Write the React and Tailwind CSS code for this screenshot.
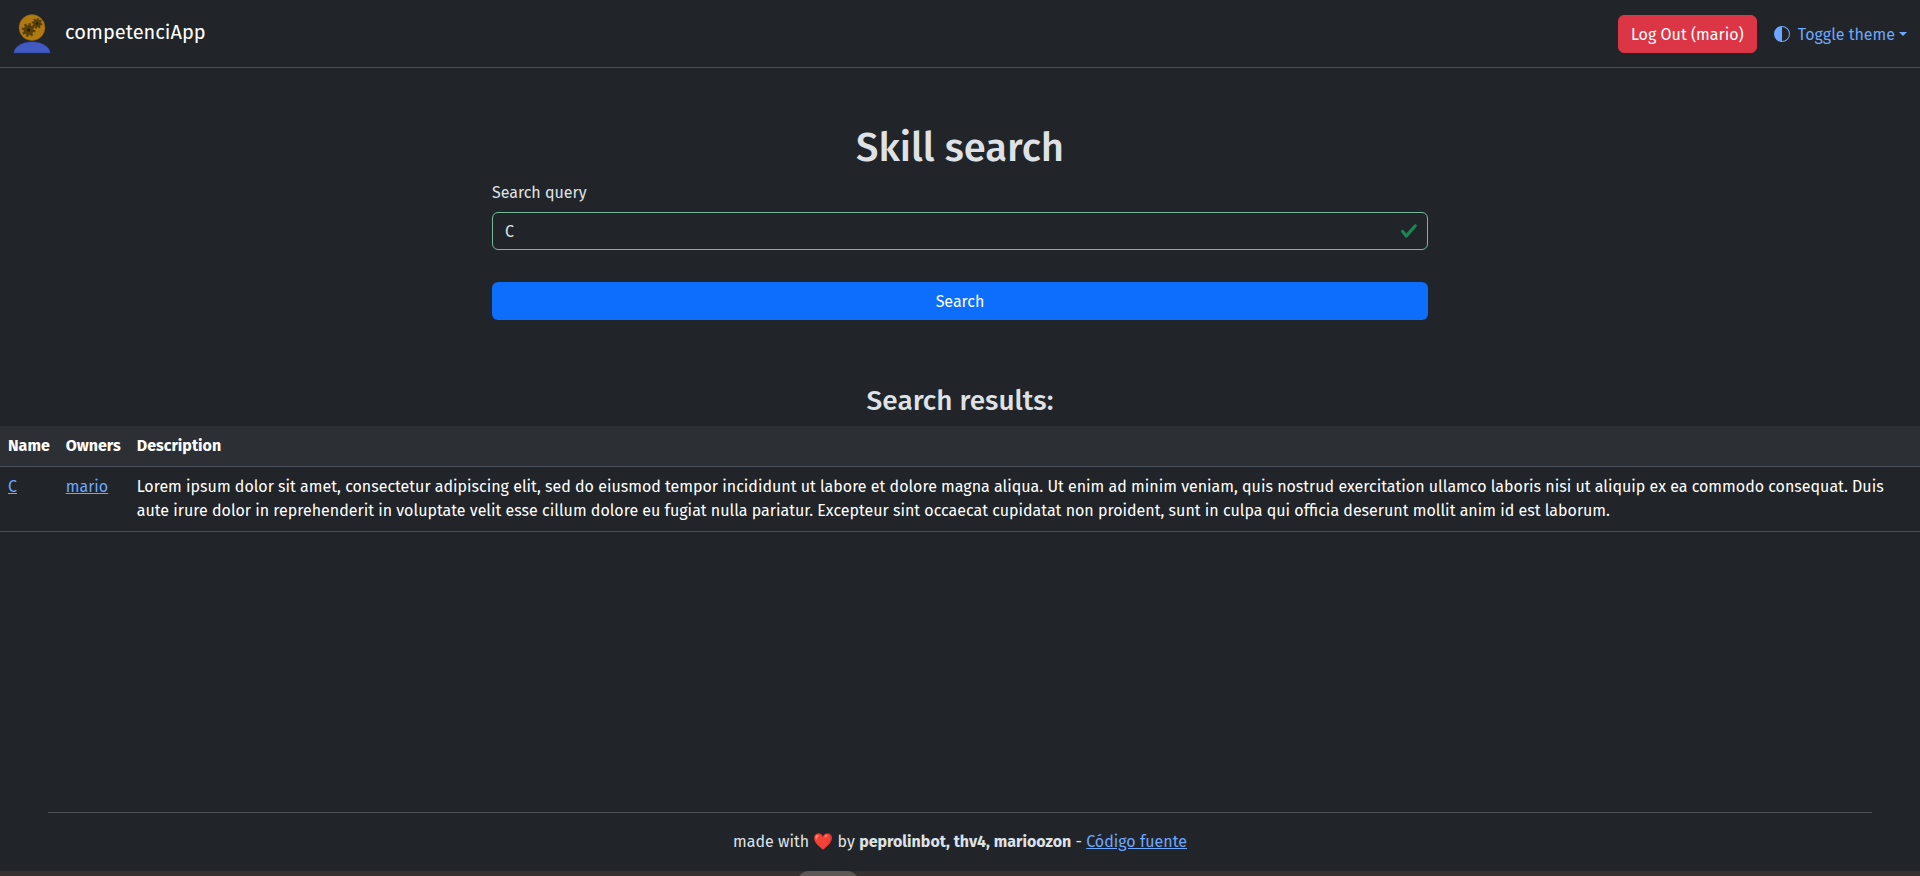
const results = [
  {
    name: 'C',
    owner: 'mario',
    description:
      'Lorem ipsum dolor sit amet, consectetur adipiscing elit, sed do eiusmod tempor incididunt ut labore et dolore magna aliqua. Ut enim ad minim veniam, quis nostrud exercitation ullamco laboris nisi ut aliquip ex ea commodo consequat. Duis aute irure dolor in reprehenderit in voluptate velit esse cillum dolore eu fugiat nulla pariatur. Excepteur sint occaecat cupidatat non proident, sunt in culpa qui officia deserunt mollit anim id est laborum.',
  },
];

const teeth = [0, 45, 90, 135, 180, 225, 270, 315];

function Gear({ x, y, scale }) {
  return (
    <g transform={`translate(${x} ${y}) scale(${scale}) rotate(12)`}>
      <circle r="5" fill="#59400a" />
      {teeth.map((angle) => (
        <rect key={angle} x="-1.2" y="-6.9" width="2.4" height="3" fill="#59400a" transform={`rotate(${angle})`} />
      ))}
      <circle r="1.6" fill="#2a1c02" />
    </g>
  );
}

function Logo() {
  return (
    <svg className="h-[42px] w-10 shrink-0" viewBox="0 0 40 42">
      <circle cx="20" cy="15.6" r="13" fill="#b17a10" stroke="#7d5a18" strokeWidth="0.5" />
      <Gear x={16.6} y={18} scale={1} />
      <Gear x={25} y={11.4} scale={0.78} />
      <path d="M1.7 41C2.2 34.6 9.8 29.7 20 29.7S37.8 34.6 38.3 41z" fill="#415ac2" stroke="#26357a" strokeWidth="0.4" />
    </svg>
  );
}

function Navbar() {
  return (
    <header className="flex h-[68px] items-center justify-between border-b border-[#495057] px-3 pt-px">
      <a href="#" className="flex items-start gap-[13px] self-start pt-[11px] text-xl leading-[30px] text-white">
        <Logo />
        <span className="pt-[5px]">competenciApp</span>
      </a>
      <div className="flex items-center gap-1">
        <button className="rounded-md border border-[#dc3545] bg-[#dc3545] px-3 pt-[7px] pb-[5px] text-white">Log Out (mario)</button>
        <button className="flex items-center border border-transparent py-1.5 pl-3 text-[#6ea8fe]">
          <svg className="mr-2 size-4" viewBox="0 0 16 16" fill="currentColor">
            <path d="M8 15A7 7 0 1 0 8 1zm0 1A8 8 0 1 1 8 0a8 8 0 0 1 0 16" />
          </svg>
          <span className="-mb-0.5">Toggle theme</span>
          <span className="ml-1 border-x-4 border-t-4 border-x-transparent border-t-current" />
        </button>
      </div>
    </header>
  );
}

function SearchForm() {
  return (
    <form className="mx-auto flex w-[936px] flex-col pt-14">
      <h1 className="mb-2 text-center text-[40px] leading-[48px] font-medium">Skill search</h1>
      <label className="mb-[7px] pt-px" htmlFor="query">Search query</label>
      <div className="mb-8 flex h-[38px] items-center rounded-md border border-[#75b798] pr-[9px] pl-3">
        <input id="query" defaultValue="C" className="min-w-0 grow bg-transparent pt-0.5 outline-none" />
        <svg className="size-[18px]" viewBox="0 0 8 8" fill="#198754">
          <path d="M2.3 6.73.6 4.53c-.4-1.04.46-1.4 1.1-.8l1.1 1.4 3.4-3.8c.6-.63 1.6-.27 1.2.7l-4 4.6c-.43.5-.8.4-1.1.1z" />
        </svg>
      </div>
      <button type="button" className="h-[38px] rounded-md bg-[#0d6efd] pt-0.5 text-white">Search</button>
    </form>
  );
}

function Results() {
  return (
    <section className="pt-16">
      <h3 className="mb-2 text-center text-[28px] leading-[34px] font-medium">Search results:</h3>
      <table className="w-full text-left align-top text-white">
        <thead>
          <tr className="border-b border-[#495057] bg-[#2c3034]">
            <th className="p-2">Name</th>
            <th className="p-2">Owners</th>
            <th className="p-2">Description</th>
          </tr>
        </thead>
        <tbody>
          {results.map((row) => (
            <tr key={row.name} className="border-b border-[#495057] align-top">
              <td className="p-2"><a href="#" className="text-[#6ea8fe] underline">{row.name}</a></td>
              <td className="p-2"><a href="#" className="text-[#6ea8fe] underline">{row.owner}</a></td>
              <td className="p-2">{row.description}</td>
            </tr>
          ))}
        </tbody>
      </table>
    </section>
  );
}

export default function App() {
  return (
    <div className="flex h-[876px] flex-col overflow-hidden bg-[#212529] font-['Fira_Sans','Noto_Sans',sans-serif] text-base text-[#dee2e6]">
      <Navbar />
      <main className="grow">
        <SearchForm />
        <Results />
      </main>
      <footer className="mx-12 border-t border-[#505458] pt-[17px] pb-[17px] text-center">
        made with ❤️ by <b>peprolinbot, thv4, marioozon</b> -{' '}
        <a href="#" className="text-[#6ea8fe] underline">Código fuente</a>
      </footer>
      <div className="h-[5px] shrink-0 overflow-hidden bg-[#363131] pl-[797px]">
        <div className="h-6 w-[62px] rounded-full bg-[#5d5756]" />
      </div>
    </div>
  );
}
